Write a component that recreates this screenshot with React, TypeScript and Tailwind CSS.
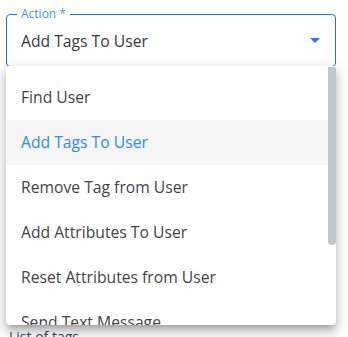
import React from "react";

const options = [
  "Find User",
  "Add Tags To User",
  "Remove Tag from User",
  "Add Attributes To User",
  "Reset Attributes from User",
  "Send Text Message",
  "Send Email",
];

export default function App() {
  const selected = "Add Tags To User";

  return (
    <div
      className="relative h-[337px] w-[348px] overflow-hidden bg-white"
      style={{ fontFamily: '"Open Sans", sans-serif' }}
    >
      <div className="flex flex-col px-[6px] pt-[14px]">
        <div className="relative flex h-[53px] w-[330px] items-center rounded-[4px] border border-[#1a73e8] pl-[14px] pr-[14px]">
          <span className="absolute left-[10px] top-[-9px] bg-white px-[4px] text-[12px] leading-[16px] text-[#3d94f6]">
            Action *
          </span>
          <span className="flex-1 pt-[2px] text-[15.7px] text-[#3a3a3a]">
            {selected}
          </span>
          <svg width="10" height="5" viewBox="0 0 10 5" className="mr-[1px]">
            <path d="M0 0h10L5 5z" fill="#1a7cf0" />
          </svg>
        </div>
        <div className="mt-[261px] pl-[3px] text-[14px] leading-[18px] text-[#34495e]">
          List of tags
        </div>
      </div>

      <div className="absolute left-[6px] top-[66px] h-[259px] w-[330px] overflow-hidden rounded-b-[4px] bg-white shadow-[0_5px_5px_-3px_rgba(0,0,0,0.2),0_8px_10px_1px_rgba(0,0,0,0.14),0_3px_14px_2px_rgba(0,0,0,0.12)]">
        <ul className="pt-[9px]">
          {options.map((opt) => (
            <li
              key={opt}
              className={`flex h-[45px] items-center pl-[15px] text-[15.7px] ${
                opt === selected
                  ? "bg-[#f5f5f5] text-[#2f8af5]"
                  : "text-[#444]"
              }`}
            >
              {opt}
            </li>
          ))}
        </ul>
        <div className="absolute right-0 top-[1px] h-[178px] w-[8px] rounded-b-[4px] bg-[#c1c6cc]" />
      </div>
    </div>
  );
}
